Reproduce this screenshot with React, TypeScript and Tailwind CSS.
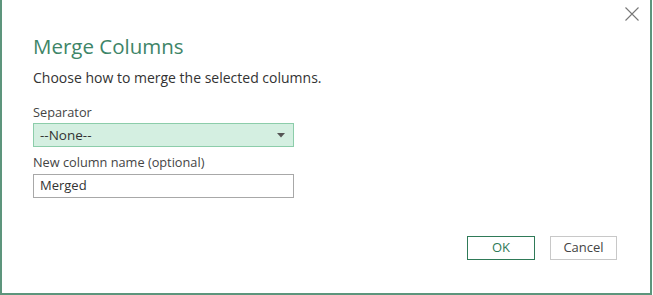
export default function App() {
  return (
    <div
      className="relative w-[653px] h-[295px] bg-white overflow-hidden"
      style={{ fontFamily: '"Open Sans", "Noto Sans", Arial, sans-serif' }}
    >
      <div className="w-[652px] h-[295px] border-l-2 border-r-2 border-b-2 border-[#5d957c] flex flex-col pl-[31px] pt-[31px]">
        <h1 className="text-[20.5px] leading-[30px] text-[#3e8568] font-normal">Merge Columns</h1>
        <p className="mt-[7px] text-[14px] leading-[20px] text-[#333333]">Choose how to merge the selected columns.</p>

        <label className="mt-[14px] text-[12.75px] leading-[20px] text-[#444444]">Separator</label>
        <div className="mt-[1px] w-[261px] h-[24px] bg-[#d4efe1] border border-[#8ccdaa] flex items-center justify-between pl-[6px] pr-[8px]">
          <span className="text-[13.5px] text-[#333333]">--None--</span>
          <svg width="8" height="5" viewBox="0 0 8 5">
            <path d="M0 0 L8 0 L4 4.5 Z" fill="#555555" />
          </svg>
        </div>

        <label className="mt-[5px] text-[12.75px] leading-[20px] text-[#444444]">New column name (optional)</label>
        <div className="mt-[2px] w-[261px] h-[24px] bg-white border border-[#a8a8a8] flex items-center pl-[6px]">
          <span className="text-[13px] text-[#333333]">Merged</span>
        </div>

        <div className="flex justify-end gap-[15px] mt-[38px] pr-[33px]">
          <button className="w-[68px] h-[24px] border border-[#2f7a58] text-[13px] text-[#2f7a58] bg-white">OK</button>
          <button className="w-[67px] h-[24px] border border-[#c8c8c8] text-[13px] text-[#444444] bg-white">Cancel</button>
        </div>
      </div>

      <svg className="absolute top-[7px] left-[625px]" width="14" height="14" viewBox="0 0 14 14">
        <path d="M0.5 0.5 L13.5 13.5 M13.5 0.5 L0.5 13.5" stroke="#777777" strokeWidth="1.1" fill="none" />
      </svg>
    </div>
  )
}
